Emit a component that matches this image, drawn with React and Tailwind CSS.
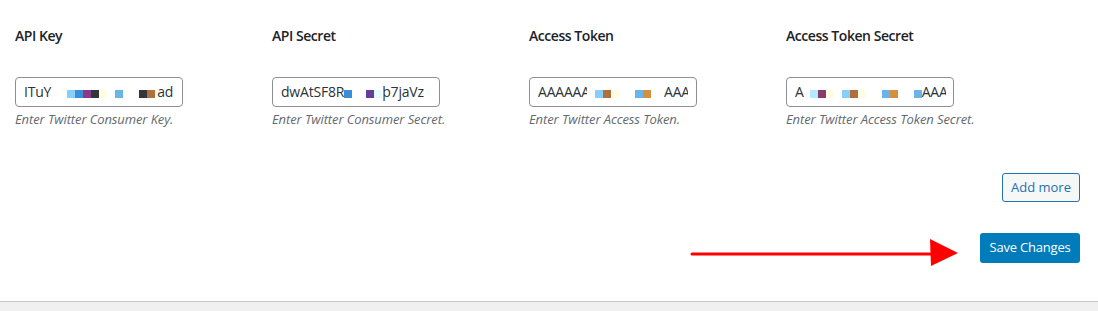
import React from "react";

const C = {
  sky: "bg-[#87cefa]",
  blue: "bg-[#3a8fd6]",
  lblue: "bg-[#6ab4ea]",
  purple: "bg-[#8b3a8b]",
  violet: "bg-[#6a3a9a]",
  plum: "bg-[#8b3a6b]",
  dark: "bg-[#33363a]",
  cream: "bg-[#fffde2]",
  brown: "bg-[#b0703e]",
  orange: "bg-[#d4903a]",
  cyan: "bg-[#e0fcff]",
  ice: "bg-[#b4eaff]",
};

const Block = ({ c, w = 8 }) => (
  <span className={`inline-block h-[8px] mt-[3px] shrink-0 ${c}`} style={{ width: w }} />
);
const Gap = ({ w }) => <span className="inline-block shrink-0" style={{ width: w }} />;

const fields = [
  {
    label: "API Key",
    help: "Enter Twitter Consumer Key.",
    value: (
      <>
        <span>ITuY</span>
        <Gap w={16} />
        <Block c={C.sky} />
        <Block c={C.blue} />
        <Block c={C.purple} />
        <Block c={C.dark} />
        <Block c={C.cream} />
        <Gap w={8} />
        <Block c={C.lblue} />
        <Gap w={16} />
        <Block c={C.dark} />
        <Block c={C.brown} />
        <Block c={C.cream} w={2} />
        <span>ad</span>
      </>
    ),
  },
  {
    label: "API Secret",
    help: "Enter Twitter Consumer Secret.",
    value: (
      <>
        <span>dwAtSF8R</span>
        <Block c={C.blue} />
        <Gap w={14} />
        <Block c={C.violet} />
        <Block c={C.cyan} />
        <span>þ7jaVz</span>
      </>
    ),
  },
  {
    label: "Access Token",
    help: "Enter Twitter Access Token.",
    value: (
      <>
        <span className="w-[49px] overflow-hidden shrink-0">AAAAAA</span>
        <Gap w={8} />
        <Block c={C.sky} />
        <Block c={C.brown} />
        <Block c={C.cream} />
        <Gap w={16} />
        <Block c={C.lblue} />
        <Block c={C.orange} />
        <Gap w={13} />
        <span className="w-[24px] overflow-hidden shrink-0">AAAA</span>
      </>
    ),
  },
  {
    label: "Access Token Secret",
    help: "Enter Twitter Access Token Secret.",
    value: (
      <>
        <span>A</span>
        <Gap w={6} />
        <Block c={C.ice} />
        <Block c={C.plum} />
        <Block c={C.cream} />
        <Gap w={8} />
        <Block c={C.sky} />
        <Block c={C.brown} />
        <Block c={C.cream} />
        <Gap w={16} />
        <Block c={C.lblue} />
        <Block c={C.orange} />
        <Gap w={16} />
        <Block c={C.lblue} />
        <span className="w-[24px] overflow-hidden shrink-0">AAAA</span>
      </>
    ),
  },
];

const App = () => {
  return (
    <div className="w-[1098px] h-[311px] bg-[#f0f0f1] font-['Open_Sans',sans-serif] text-[#1d2327] overflow-hidden">
      <div className="relative bg-white border-b border-[#c8c9cc] h-[302px] pt-[26px] pl-[15px] pr-[18px]">
        <div className="flex">
          {fields.map((f) => (
            <div key={f.label} className="w-[257px] shrink-0">
              <div className="text-[14px] leading-[20px] font-semibold tracking-[-0.45px]">{f.label}</div>
              <div className="mt-[31px] w-[168px] h-[30px] border border-[#8c8f94] rounded-[4px] px-[8px] flex items-center text-[14px] leading-[20px] text-[#2c3338] tracking-[-0.2px] overflow-hidden whitespace-nowrap">
                {f.value}
              </div>
              <div className="mt-[3px] text-[13px] leading-[18px] italic text-[#646970] tracking-[-0.1px]">{f.help}</div>
            </div>
          ))}
        </div>

        <div className="flex flex-col items-end mt-[45px]">
          <button className="h-[29px] w-[78px] border border-[#2271b1] bg-[#f6f7f7] text-[#2271b1] rounded-[3px] text-[13px]">
            Add more
          </button>
          <button className="mt-[31px] h-[30px] w-[100px] bg-[#007cba] text-white rounded-[3px] text-[13px] tracking-[-0.2px]">
            Save Changes
          </button>
        </div>

        {/* red annotation arrow */}
        <svg className="absolute left-[690px] top-[237px]" width="272" height="32" viewBox="0 0 272 32">
          <line x1="2" y1="17" x2="245" y2="17" stroke="#ff0000" strokeWidth="3" strokeLinecap="round" />
          <polygon points="240,2 268,16 241,29" fill="#ff0000" />
        </svg>
      </div>
    </div>
  );
};

export default App;
